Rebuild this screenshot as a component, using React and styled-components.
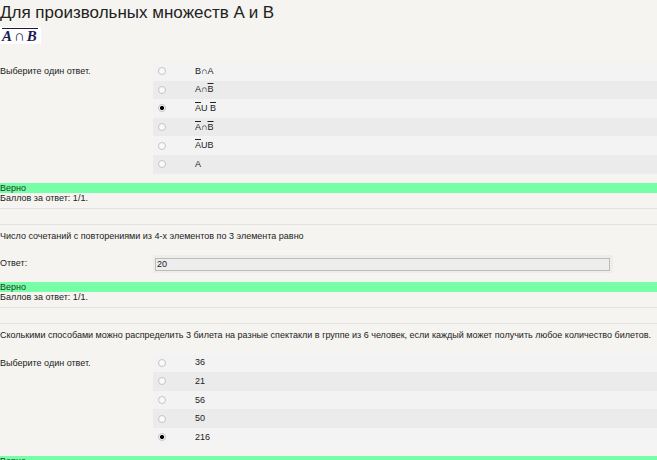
import React from 'react';
import styled, { createGlobalStyle, css } from 'styled-components';

const GlobalStyle = createGlobalStyle`
  html, body {
    margin: 0;
    padding: 0;
    background: #f5f4f0;
  }
  body {
    font-family: "Liberation Sans", Arial, sans-serif;
    color: #222;
  }
`;

const Bar = styled.span`
  text-decoration: overline;
`;

const questions = [
  {
    id: 1,
    kind: 'choice',
    options: [
      { id: 'a', label: <>B∩A</> },
      { id: 'b', label: <>A∩<Bar>B</Bar></> },
      { id: 'c', label: <><Bar>A</Bar>U <Bar>B</Bar></>, checked: true },
      { id: 'd', label: <><Bar>A</Bar>∩<Bar>B</Bar></> },
      { id: 'e', label: <><Bar>A</Bar>UB</> },
      { id: 'f', label: <>A</> },
    ],
  },
  {
    id: 2,
    kind: 'input',
    text: 'Число сочетаний с повторениями из 4-х элементов по 3 элемента равно',
    value: '20',
  },
  {
    id: 3,
    kind: 'choice',
    text: 'Сколькими способами можно распределить 3 билета на разные спектакли в группе из 6 человек, если каждый может получить любое количество билетов.',
    options: [
      { id: 'a', label: '36' },
      { id: 'b', label: '21' },
      { id: 'c', label: '56' },
      { id: 'd', label: '50' },
      { id: 'e', label: '216', checked: true },
    ],
  },
];

const App = () => (
  <>
    <GlobalStyle />
    <Page>
      {questions.map((q, i) => (
        <Question key={q.id} $first={i === 0}>
          {i === 0 ? (
            <>
              <Title>Для произвольных множеств A и B</Title>
              <Formula>
                <FormulaText>
                  A<Cap>∩</Cap>B
                </FormulaText>
              </Formula>
            </>
          ) : (
            <QuestionText>{q.text}</QuestionText>
          )}

          {q.kind === 'choice' ? (
            <AnswerRow $first={i === 0}>
              <Prompt>Выберите один ответ.</Prompt>
              <Options>
                {q.options.map((o) => (
                  <Option key={o.id}>
                    <Radio type="radio" name={`q${q.id}`} defaultChecked={!!o.checked} />
                    <OptionLabel>{o.label}</OptionLabel>
                  </Option>
                ))}
              </Options>
            </AnswerRow>
          ) : (
            <InputRow>
              <Prompt $center>Ответ:</Prompt>
              <InputBox>
                <AnswerInput type="text" defaultValue={q.value} readOnly />
              </InputBox>
            </InputRow>
          )}

          <Feedback>Верно</Feedback>
          {i < questions.length - 1 && <Grade>Баллов за ответ: 1/1.</Grade>}
        </Question>
      ))}
    </Page>
  </>
);

const Page = styled.div`
  width: 657px;
  min-height: 460px;
  font-size: 9px;
`;

const Question = styled.div`
  padding-bottom: 4px;
  border-bottom: 1px solid #e2e2e0;

  ${({ $first }) =>
    !$first &&
    css`
      margin-top: 15px;
      border-top: 1px solid #e2e2e0;
      padding-top: 6px;
    `}
`;

const Title = styled.h2`
  margin: 0;
  padding-top: 3px;
  font-size: 17px;
  line-height: 20px;
  font-weight: normal;
  color: #222;
`;

const Formula = styled.div`
  display: inline-block;
  margin-top: 4px;
  height: 17px;
  padding: 0 3px 0 2px;
  background: #fff;
`;

const FormulaText = styled.span`
  display: inline-block;
  margin-top: 1px;
  border-top: 1px solid #1a1a40;
  font-family: "Liberation Serif", "Times New Roman", serif;
  font-style: italic;
  font-weight: bold;
  font-size: 15px;
  line-height: 15px;
  color: #1c1c55;
  letter-spacing: 1px;
`;

const Cap = styled.span`
  font-style: normal;
  font-weight: normal;
  margin: 0 1px;
`;

const QuestionText = styled.div`
  line-height: 11px;
`;

const AnswerRow = styled.div`
  display: flex;
  align-items: flex-start;
  margin-top: ${({ $first }) => ($first ? '18px' : '13px')};
`;

const InputRow = styled.div`
  display: flex;
  align-items: center;
  margin-top: 13px;
`;

const Prompt = styled.div`
  width: 153px;
  flex-shrink: 0;
  line-height: 11px;
  padding-top: ${({ $center }) => ($center ? '0' : '4px')};
`;

const Options = styled.div`
  flex: 1;
  display: flex;
  flex-direction: column;
`;

const Option = styled.label`
  display: flex;
  align-items: center;
  height: 18.6px;
  background: #f3f3f3;

  &:nth-child(even) {
    background: #ebebeb;
  }
`;

const Radio = styled.input`
  appearance: none;
  margin: 0 0 0 5px;
  width: 8px;
  height: 8px;
  border: 1px solid #c4c4c4;
  border-radius: 50%;
  background: #fafafa;

  &:checked {
    background: radial-gradient(circle, #000 0 1.8px, #f4f4f4 2.3px);
  }
`;

const OptionLabel = styled.span`
  margin-left: 29px;
  line-height: 11px;
`;

const InputBox = styled.div`
  width: 460px;
  height: 18px;
  box-sizing: border-box;
  padding: 3px 3px 2px 2px;
  background: #ededed;
`;

const AnswerInput = styled.input`
  box-sizing: border-box;
  width: 455px;
  height: 13px;
  margin: 0;
  padding: 0 1px;
  border: 1px solid #bdbdb6;
  background: #ededed;
  font-family: "Liberation Sans", Arial, sans-serif;
  font-size: 9px;
  color: #222;
  outline: none;
`;

const Feedback = styled.div`
  margin-top: 9px;
  height: 10px;
  line-height: 10px;
  background: #76ffa6;
  color: #1f3a26;
`;

const Grade = styled.div`
  line-height: 11px;
`;

export default App;
